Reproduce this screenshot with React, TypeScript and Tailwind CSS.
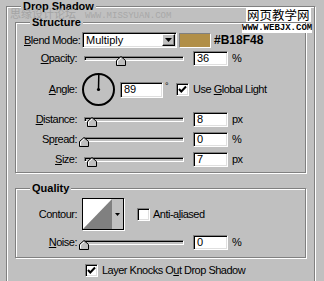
import React from "react";

// sunken white field (inputs, select, checkbox)
const SUNKEN =
  "border border-t-[#808080] border-l-[#808080] border-b-white border-r-white shadow-[inset_1px_1px_0_#000,inset_-1px_-1px_0_#dfdfdf] bg-white";

function Group({ title, className, children }: { title: string; className?: string; children?: React.ReactNode }) {
  return (
    <div className={`relative border border-[#808080] shadow-[inset_1px_1px_0_#fff,1px_1px_0_#fff] ${className ?? ""}`}>
      <span className="absolute left-[14px] top-[-8px] bg-[#c0c0c0] px-[2px] text-[11px] font-bold leading-[14px] tracking-normal">
        {title}
      </span>
      {children}
    </div>
  );
}

function Thumb({ left }: { left: number }) {
  return (
    <svg className="absolute top-[6px]" style={{ left }} width="10" height="10" viewBox="0 0 10 10">
      <polygon points="0.5,9.5 0.5,4.5 5,0.5 9.5,4.5 9.5,9.5" fill="#c0c0c0" stroke="#000" />
      <polyline points="1.5,8.5 1.5,5 5,2" fill="none" stroke="#fff" />
    </svg>
  );
}

function Slider({ thumb }: { thumb: number }) {
  return (
    <div className="relative ml-[7px] flex h-[16px] w-[100px] items-center">
      <div className="h-[5px] w-full border border-t-[#808080] border-l-[#808080] border-b-white border-r-white bg-[#c0c0c0] shadow-[inset_1px_1px_0_#000]" />
      <Thumb left={thumb} />
    </div>
  );
}

function Field({ value, w, h }: { value: string; w: string; h: string }) {
  return (
    <div className={`${SUNKEN} ${w} ${h} flex items-center pl-[3px] text-[11px] tracking-normal`}>{value}</div>
  );
}

function Check({ className }: { className?: string }) {
  return (
    <div className={`${SUNKEN} h-[13px] w-[13px] shrink-0 ${className ?? ""}`}>
      <svg width="11" height="11" viewBox="0 0 11 11">
        <polyline points="2,5 4.3,7.5 9,2.5" fill="none" stroke="#000" strokeWidth="2" />
      </svg>
    </div>
  );
}

function SliderRow({ label, thumb, value, unit, className }: { label: React.ReactNode; thumb: number; value: string; unit: string; className?: string }) {
  return (
    <div className={`flex h-[16px] items-center ${className ?? ""}`}>
      <div className="w-[61px] text-right">{label}</div>
      <Slider thumb={thumb} />
      <div className="ml-[9px]">
        <Field value={value} w="w-[35px]" h="h-[15px]" />
      </div>
      <span className="ml-[4px]">{unit}</span>
    </div>
  );
}

export default function App() {
  return (
    <div className="relative h-[281px] w-[324px] overflow-hidden bg-[#c0c0c0] font-['Liberation_Sans',Arial,sans-serif] text-[11px] leading-[13px] tracking-[-0.5px] text-black">
      <Group title="Drop Shadow" className="ml-[6px] mt-[6px] w-[309px] pb-[30px] pl-[8px] pt-[15px]">
        {/* Structure */}
        <Group title="Structure" className="h-[151px] w-[291px] pt-[9px]">
          <div className="flex h-[16px] items-center">
            <div className="w-[66px] pl-[8px]">
              <u>B</u>lend Mode:
            </div>
            <div className={`${SUNKEN} flex h-[16px] w-[95px] items-center justify-between pl-[3px] pr-px tracking-normal`}>
              <span>Multiply</span>
              <div className="flex h-[12px] w-[13px] items-center justify-center border border-t-white border-l-white border-b-black border-r-black bg-[#c0c0c0] shadow-[inset_-1px_-1px_0_#808080]">
                <svg width="7" height="4" viewBox="0 0 7 4">
                  <polygon points="0,0 7,0 3.5,4" fill="#000" />
                </svg>
              </div>
            </div>
            <div className="ml-[2px] h-[15px] w-[32px] border border-t-[#808080] border-l-[#808080] border-b-white border-r-white bg-[#b18f48]" />
            <span className="ml-[3px] text-[12px] font-bold tracking-normal">#B18F48</span>
          </div>

          <SliderRow className="mt-[2px]" label={<><u>O</u>pacity:</>} thumb={32} value="36" unit="%" />

          <div className="mt-[6px] flex h-[35px] items-center">
            <div className="w-[61px] text-right">
              <u>A</u>ngle:
            </div>
            <svg className="ml-[4px]" width="35" height="35" viewBox="0 0 35 35">
              <circle cx="17.5" cy="17.5" r="15.5" fill="none" stroke="#000" strokeWidth="2" />
              <line x1="17.5" y1="17.5" x2="17.8" y2="3" stroke="#000" strokeWidth="1.5" />
              <circle cx="17.5" cy="17.5" r="1.6" fill="#000" />
            </svg>
            <div className="ml-[4px]">
              <Field value="89" w="w-[43px]" h="h-[16px]" />
            </div>
            <span className="ml-[2px] self-start pt-[8px] text-[9px]">°</span>
            <Check className="ml-[8px]" />
            <span className="ml-[4px]">
              Use <u>G</u>lobal Light
            </span>
          </div>

          <SliderRow className="mt-[4px]" label={<><u>D</u>istance:</>} thumb={3} value="8" unit="px" />
          <SliderRow className="mt-[4px]" label={<>Sp<u>r</u>ead:</>} thumb={-5} value="0" unit="%" />
          <SliderRow className="mt-[4px]" label={<><u>S</u>ize:</>} thumb={3} value="7" unit="px" />
        </Group>

        {/* Quality */}
        <Group title="Quality" className="mt-[15px] h-[70px] w-[291px] pt-[9px]">
          <div className="flex h-[32px] items-center">
            <div className="w-[61px] text-right">Contour:</div>
            <div className="ml-[5px] flex h-[32px] w-[42px] border border-black shadow-[1px_1px_0_#fff]">
              <svg width="29" height="30" viewBox="0 0 29 30">
                <rect width="29" height="30" fill="#fff" />
                <polygon points="0,30 29,0 29,30" fill="#808080" />
              </svg>
              <div className="flex flex-1 items-center justify-center bg-[#c0c0c0]">
                <svg width="5" height="3" viewBox="0 0 5 3">
                  <polygon points="0,0 5,0 2.5,3" fill="#000" />
                </svg>
              </div>
            </div>
            <div className={`${SUNKEN} ml-[13px] h-[13px] w-[13px]`} />
            <span className="ml-[3px]">
              Anti-a<u>l</u>iased
            </span>
          </div>
          <SliderRow className="mt-[4px]" label={<><u>N</u>oise:</>} thumb={-5} value="0" unit="%" />
        </Group>

        <div className="ml-[70px] mt-[6px] flex h-[13px] items-center">
          <Check />
          <span className="ml-[4px]">
            Layer Knocks O<u>u</u>t Drop Shadow
          </span>
        </div>
      </Group>

      {/* watermarks */}
      <span className="absolute left-[10px] top-[7px] font-['Noto_Sans_CJK_SC',sans-serif] text-[11px] leading-[12px] tracking-normal text-[#a4a4a4]">
        思缘设计论坛
      </span>
      <span className="absolute left-[85px] top-[12px] font-['Liberation_Mono',monospace] text-[9px] leading-[9px] tracking-normal text-[#a8a8a8]">
        WWW.MISSYUAN.COM
      </span>
      <span className="absolute left-[246px] top-[8px] bg-white px-[1px] font-['Noto_Sans_CJK_SC',sans-serif] text-[12.5px] leading-[14px] tracking-normal text-black">
        网页教学网
      </span>
      <span className="absolute left-[242px] top-[24px] bg-white font-['Liberation_Mono',monospace] text-[9px] font-bold leading-[9px] tracking-normal text-black">
        WWW.WEBJX.COM
      </span>
    </div>
  );
}
